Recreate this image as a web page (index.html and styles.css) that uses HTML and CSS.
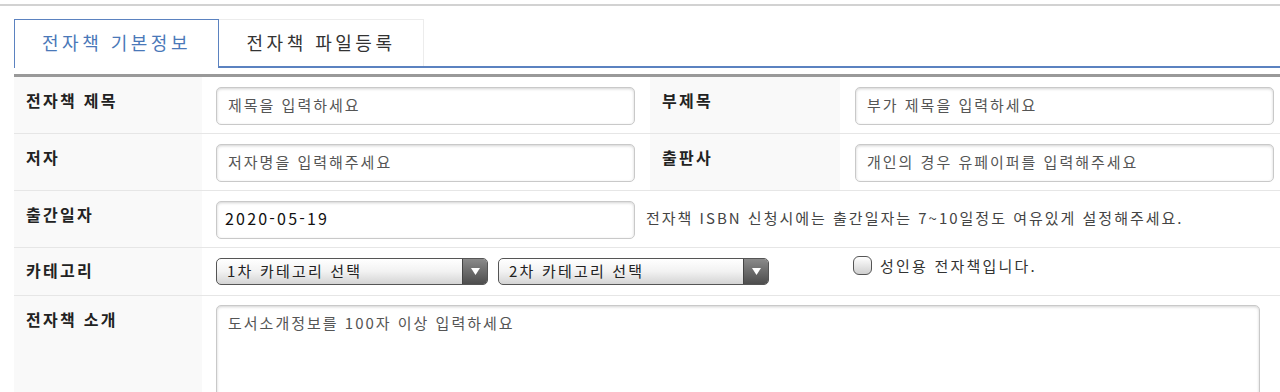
FILE: index.html
```html
<!DOCTYPE html>
<html lang="ko">
<head>
<meta charset="UTF-8">
<title>전자책 등록</title>
<link rel="stylesheet" href="styles.css">
</head>
<body>
<div class="topbar"></div>

<ul class="tabs">
<li class="tab active">전자책 기본정보</li>
<li class="tab">전자책 파일등록</li>
</ul>

<div class="form">
<div class="row">
<div class="label">전자책 제목</div>
<div class="field"><input type="text" placeholder="제목을 입력하세요"></div>
<div class="label">부제목</div>
<div class="field right"><input type="text" placeholder="부가 제목을 입력하세요"></div>
</div>

<div class="row">
<div class="label">저자</div>
<div class="field"><input type="text" placeholder="저자명을 입력해주세요"></div>
<div class="label">출판사</div>
<div class="field right"><input type="text" placeholder="개인의 경우 유페이퍼를 입력해주세요"></div>
</div>

<div class="row">
<div class="label">출간일자</div>
<div class="field wide">
<input type="text" class="date" value="2020-05-19">
<span class="note">전자책 ISBN 신청시에는 출간일자는 7~10일정도 여유있게 설정해주세요.</span>
</div>
</div>

<div class="row cat">
<div class="label">카테고리</div>
<div class="field wide">
<div class="select">
<select><option>1차 카테고리 선택</option></select>
<span class="arrow"><svg width="9" height="7" viewBox="0 0 9 7"><path d="M0 0h9L4.5 7z" fill="#fff"/></svg></span>
</div>
<div class="select">
<select><option>2차 카테고리 선택</option></select>
<span class="arrow"><svg width="9" height="7" viewBox="0 0 9 7"><path d="M0 0h9L4.5 7z" fill="#fff"/></svg></span>
</div>
<label class="adult"><span class="check"></span>성인용 전자책입니다.</label>
</div>
</div>

<div class="row intro">
<div class="label">전자책 소개</div>
<div class="field wide"><textarea placeholder="도서소개정보를 100자 이상 입력하세요"></textarea></div>
</div>
</div>
</body>
</html>
```

FILE: styles.css
```css
body { margin:0; font-family:"Noto Sans CJK KR", "Noto Sans", sans-serif; color:#222; background:#fff; }
.topbar { height:4px; border-bottom:2px solid #d2d2d2; }

.tabs { list-style:none; margin:13px 0 0 14px; padding:0; display:flex; border-bottom:2px solid #5b82c0; height:47px; }
.tab { width:205px; box-sizing:border-box; border:1px solid #ececec; border-left:none; border-bottom:none; text-align:center; font-size:18px; letter-spacing:3.5px; line-height:44px; color:#333; }
.tab.active { border:1px solid #5b82c0; border-bottom:none; background:#fff; color:#4a78b8; height:49px; margin-bottom:-2px; }

.form { margin:6px 0 0 14px; border-top:3px solid #999; }
.row { display:grid; grid-template-columns:188px 448px 190px 1fr; border-bottom:1px solid #e6e6e6; }
.label { background:#f9f9f9; font-size:16px; font-weight:bold; letter-spacing:2.3px; line-height:20px; padding:13px 0 0 12px; }
.field { padding:10px 0 8px 14px; }
.field.right { padding-left:15px; }
.field.wide { grid-column:2 / 5; display:flex; align-items:center; }

input, textarea { box-sizing:border-box; width:419px; height:38px; border:1px solid #c9c9c9; border-radius:5px; box-shadow:inset 0 1px 3px rgba(0,0,0,.18); padding:0 11px 4px; font-family:inherit; font-size:15px; letter-spacing:2px; color:#111; background:#fff; }
input::placeholder, textarea::placeholder { color:#555; }
.date { font-size:16px; letter-spacing:2.2px; padding-left:8px; }
.note { margin-left:11px; font-size:15px; color:#444; letter-spacing:2px; padding-bottom:6px; }

.cat .label { padding-top:12px; }
.cat .field { padding:10px 0 10px 14px; }
.select { display:flex; width:272px; height:27px; box-sizing:border-box; border:1px solid #555; border-radius:5px; overflow:hidden; background:linear-gradient(#fff, #f2f2f2 50%, #d4d4d4); margin-right:10px; }
.select + .select { width:271px; }
.select select { flex:1; appearance:none; border:none; background:transparent; font-family:inherit; font-size:15px; letter-spacing:2.2px; color:#222; padding:0 0 2px 10px; outline:none; }
.arrow { width:24px; display:flex; align-items:center; justify-content:center; border-left:1px solid #444; background:linear-gradient(#8a8a8a, #4d4d4d); }
.adult { display:flex; align-items:center; margin:-12px 0 0 74px; font-size:15px; color:#333; letter-spacing:2.2px; }
.check { width:19px; height:19px; box-sizing:border-box; border:1px solid #555; border-radius:6px; background:linear-gradient(#fff, #cfcfcf); margin-right:8px; }

.intro .field { align-items:flex-start; padding-top:9px; }
textarea { width:1044px; height:120px; padding:6px 11px; resize:none; display:block; }
```
